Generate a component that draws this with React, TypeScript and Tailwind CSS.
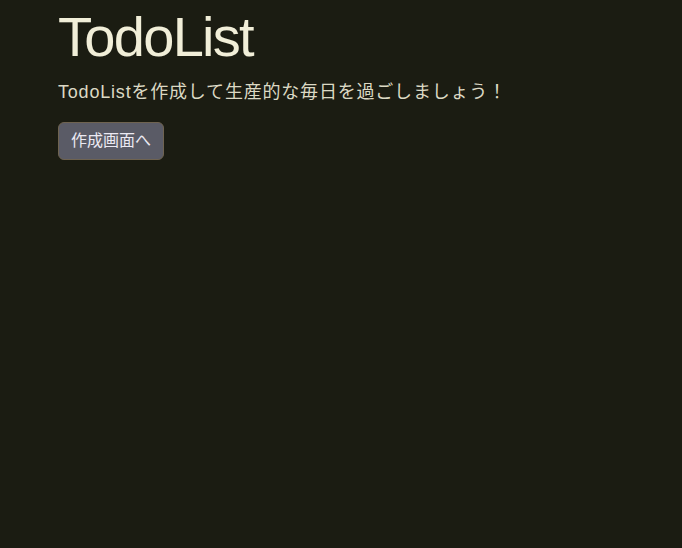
export default function App() {
  return (
    <div
      className="min-h-screen w-full bg-[#1b1c12] pl-[58px] pt-[3px]"
      style={{ fontFamily: '"Liberation Sans", "Noto Sans CJK JP", sans-serif' }}
    >
      <h1 className="text-[56px] leading-[1.2] tracking-[-1.7px] text-[#f1eed8]">TodoList</h1>
      <p className="mt-[9px] text-[18px] leading-[27px] tracking-[0.8px] text-[#dcd9c4]">
        TodoListを作成して生産的な毎日を過ごしましょう！
      </p>
      <button className="mt-[16px] rounded-md border border-[#6f6350] bg-[#5a5b66] px-3 py-1.5 text-base leading-6 text-[#ebe9f2]">
        作成画面へ
      </button>
    </div>
  );
}
